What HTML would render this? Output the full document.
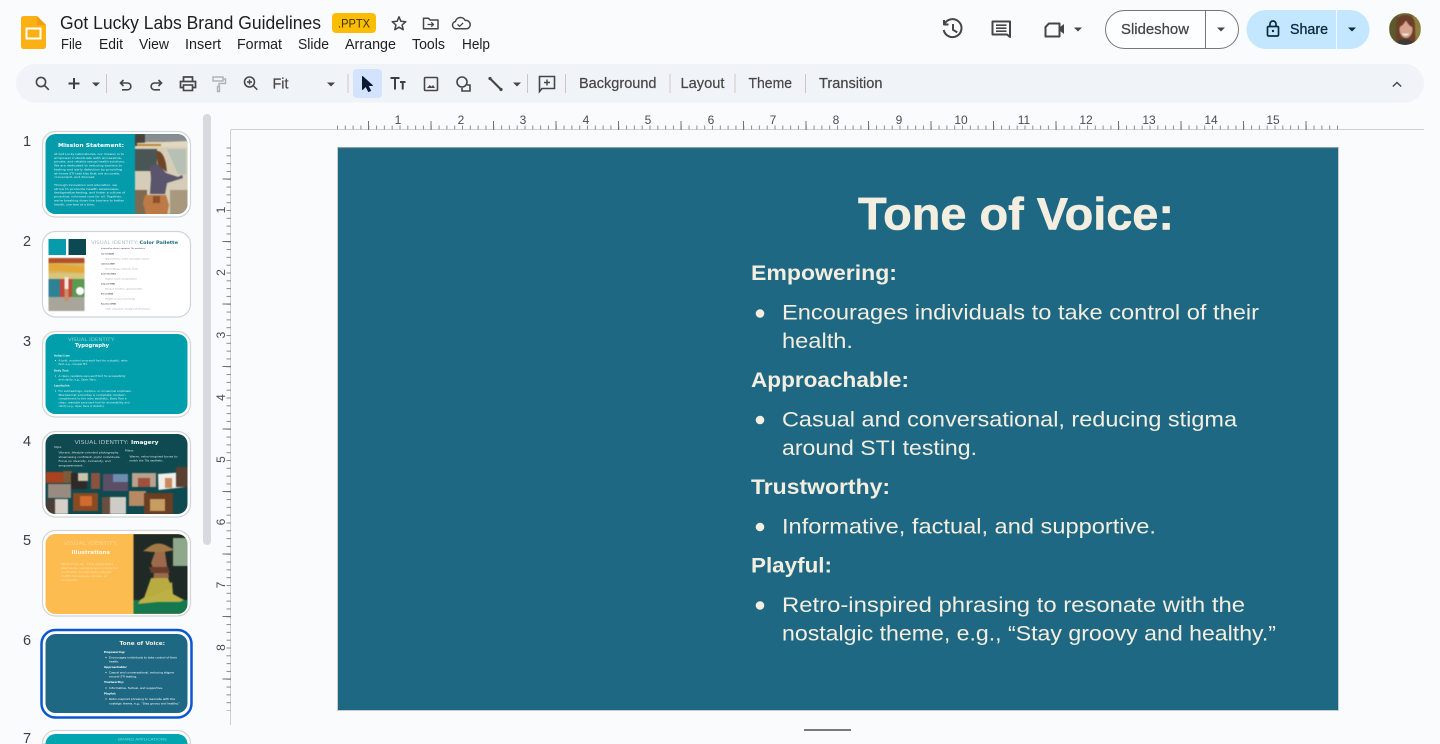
<!DOCTYPE html>
<html lang="en"><head><meta charset="utf-8"><title>Got Lucky Labs Brand Guidelines</title>
<style>
html,body{margin:0;padding:0;width:1440px;height:744px;overflow:hidden;background:#f9fbfd}
svg{display:block;overflow:hidden}
text{font-family:"Liberation Sans",Arial,sans-serif}
.t{fill:#1f1f1f}
.m{font-size:14.5px;fill:#1f1f1f}
.tb{font-size:14.5px;fill:#444746;stroke:#444746;stroke-width:.2px}
.r{font-size:12px;fill:#4a4d4f;text-anchor:middle}
.mono{font-family:"DejaVu Sans",sans-serif}
.n{font-size:14.5px;fill:#3c4043;text-anchor:middle}
.s{fill:#f3eee0}
.sb{fill:#f3eee0;font-weight:700}
.th{font-family:"DejaVu Sans",sans-serif;font-size:3px;fill:#fff}
.thb{font-family:"DejaVu Sans",sans-serif;font-weight:700;fill:#fff}
.blur{filter:blur(.5px)}
.blur2{filter:blur(.25px)}
</style></head><body>
<svg width="1440" height="744" viewBox="0 0 1440 744" xmlns="http://www.w3.org/2000/svg">
<defs>
<pattern id="hmin" x="337" y="120" width="7.8125" height="10" patternUnits="userSpaceOnUse"><rect x="0" y="5.500" width="1" height="4" fill="#8a8d8e"/></pattern>
<pattern id="hmaj" x="368" y="120" width="62.5" height="10" patternUnits="userSpaceOnUse"><rect x="0" y="1" width="1" height="9" fill="#6f7274"/></pattern>
<pattern id="vmin" x="226" y="147.5" width="5" height="7.8125" patternUnits="userSpaceOnUse"><rect x="0.5" y="0" width="4.5" height="1" fill="#8a8d8e"/></pattern>
<pattern id="vmaj" x="222" y="178.5" width="9" height="62.5" patternUnits="userSpaceOnUse"><rect x="0.5" y="0" width="8.5" height="1" fill="#6f7274"/></pattern>
<clipPath id="c1"><rect x="45.500" y="134" width="142" height="80" rx="10"/></clipPath>
<clipPath id="c2"><rect x="45.500" y="234" width="142" height="80" rx="10"/></clipPath>
<clipPath id="c4"><rect x="45.500" y="434" width="142" height="80" rx="10"/></clipPath>
<clipPath id="c5"><rect x="45.500" y="534" width="142" height="80" rx="10"/></clipPath>
<clipPath id="av"><circle cx="1405" cy="29" r="16"/></clipPath>
</defs>
<rect width="1440" height="744" fill="#f9fbfd"/>

<!-- logo -->
<path d="M21 18.500a2.500 2.500 0 0 1 2.500-2.500H37l9 9v21.500a2.500 2.500 0 0 1-2.500 2.500h-20a2.500 2.500 0 0 1-2.500-2.500z" fill="#fbb114"/>
<path d="M37 16l9 9h-9z" fill="#f29d0c"/>
<rect x="26.500" y="28.500" width="14" height="10" fill="none" stroke="#fff" stroke-width="2"/>

<text x="60" y="29" font-size="18.500" class="t" textLength="261" lengthAdjust="spacingAndGlyphs">Got Lucky Labs Brand Guidelines</text>
<rect x="332" y="13" width="44" height="20" rx="4" fill="#fbbc04"/>
<text x="338" y="27.500" font-size="11.500" fill="#3c3200" textLength="32" lengthAdjust="spacingAndGlyphs">.PPTX</text>
<g fill="none" stroke="#444746" stroke-width="1.500" stroke-linejoin="round">
<path d="M399 16.800l1.900 4.500 4.900.4-3.700 3.200 1.100 4.800-4.200-2.500-4.200 2.500 1.100-4.800-3.700-3.200 4.900-.4z"/>
<path d="M423.500 28.800V18.300h5l1.600 1.700h7.900v8.800z"/>
<path d="M427.500 24.500h6m-2.300-2.200l2.300 2.200-2.300 2.200" stroke-width="1.300"/>
<path d="M458 28.800h-1.500-0a0 0 0 0 1 0 0h-.5M457 28.800h-.5"/>
<path d="M466.800 28.800h-10.800a3.700 3.700 0 0 1-.6-7.300 5.200 5.200 0 0 1 9.800-1 4.200 4.200 0 0 1 1.600 8.300z"/>
<path d="M457.500 24.300l2.100 2.100 3.500-3.500" stroke-width="1.300"/>
</g>

<text x="61" y="49" class="m" textLength="21" lengthAdjust="spacingAndGlyphs">File</text>
<text x="99" y="49" class="m" textLength="24" lengthAdjust="spacingAndGlyphs">Edit</text>
<text x="139" y="49" class="m" textLength="30" lengthAdjust="spacingAndGlyphs">View</text>
<text x="185" y="49" class="m" textLength="36" lengthAdjust="spacingAndGlyphs">Insert</text>
<text x="237" y="49" class="m" textLength="45" lengthAdjust="spacingAndGlyphs">Format</text>
<text x="298" y="49" class="m" textLength="31" lengthAdjust="spacingAndGlyphs">Slide</text>
<text x="345" y="49" class="m" textLength="51" lengthAdjust="spacingAndGlyphs">Arrange</text>
<text x="412" y="49" class="m" textLength="33" lengthAdjust="spacingAndGlyphs">Tools</text>
<text x="462" y="49" class="m" textLength="28" lengthAdjust="spacingAndGlyphs">Help</text>

<!-- top right -->
<g fill="none" stroke="#444746" stroke-width="2">
<path d="M944.500 24a9 9 0 1 1-.8 6"/>
<path d="M944 20v4.500h4.500" stroke-linejoin="round"/>
<path d="M953 24v5.800l4.300 2.600"/>
<path d="M992.500 21.500h17.500v15.500l-3-2.500h-14.500z" stroke-linejoin="round"/>
<path d="M996 25.200h10.500M996 28.200h10.500M996 31.200h10.500" stroke-width="1.700"/>
<path d="M1049 23.500h10.500v13H1045.500v-9.500z" stroke-linejoin="round"/>
</g>
<path d="M1059.500 27.500l4.500-3.500v10l-4.500-3.500z" fill="#444746"/>
<path d="M1074 27.500h8l-4 4z" fill="#444746"/>
<rect x="1105.500" y="10.500" width="133" height="38" rx="19" fill="#fff" fill-opacity=".7" stroke="#747775"/>
<path d="M1205.500 10.500v38" stroke="#747775"/>
<text x="1121" y="34" font-size="14.500" fill="#444746" stroke="#444746" stroke-width=".25" textLength="68" lengthAdjust="spacingAndGlyphs">Slideshow</text>
<path d="M1217 27.500h8l-4 4z" fill="#444746"/>
<path d="M1266 10h84a19 19 0 0 1 0 39h-84a19 19 0 0 1 0-39z" fill="#c2e7ff"/>
<path d="M1336.500 10v39" stroke="#f2fbff"/>
<rect x="1267.500" y="26.500" width="11" height="9.500" rx="1.200" fill="none" stroke="#0c2a3d" stroke-width="1.700"/>
<path d="M1270 26.500v-2.500a3 3 0 0 1 6 0v2.500" fill="none" stroke="#0c2a3d" stroke-width="1.700"/>
<circle cx="1273" cy="31" r="1.200" fill="#0c2a3d"/>
<text x="1290" y="34" font-size="14.500" fill="#0c2a3d" stroke="#0c2a3d" stroke-width=".3" textLength="38" lengthAdjust="spacingAndGlyphs">Share</text>
<path d="M1348 27.500h8l-4 4z" fill="#0c2a3d"/>
<g clip-path="url(#av)"><g class="blur">
<rect x="1389" y="13" width="32" height="32" fill="#6f6a36"/>
<rect x="1389" y="13" width="9" height="32" fill="#5c5a2b"/>
<rect x="1413" y="13" width="8" height="32" fill="#8d7f3c"/>
<path d="M1396 44v-18q0-11 9.500-11t9.500 11l.5 18z" fill="#6b3f2a"/>
<ellipse cx="1406" cy="29.500" rx="6.500" ry="8.500" fill="#d8a48e"/>
<path d="M1399 27q4-1 7-7 2 5 6 7l1-6-6-3-6 2z" fill="#6b3f2a"/>
<path d="M1402 33q3.500 2 7 0-1 2.500-3.500 2.500t-3.500-2.500z" fill="#fff"/>
<path d="M1396 46q1-7 9-7t9 7z" fill="#3a3a38"/>
</g></g>

<!-- toolbar -->
<rect x="16" y="64" width="1408" height="38.500" rx="19" fill="#f0f4f9"/>
<rect x="353" y="69" width="29" height="29" rx="4" fill="#d3e3fd"/>
<g fill="none" stroke="#444746" stroke-width="1.600">
<circle cx="41" cy="82" r="4.600"/><path d="M44.500 85.500l4.300 4.300"/>
<path d="M74 78v11M68.500 83.500h11" stroke-width="2" stroke="#3c4043"/>
<path d="M106.500 74v19" stroke="#c7c7c7" stroke-width="1"/>
<path d="M121 83h6.500a3.400 3.400 0 0 1 0 6.800h-5.500"/><path d="M123.500 80l-3 3 3 3"/>
<path d="M161 83h-6.500a3.400 3.400 0 0 0 0 6.800h5.500"/><path d="M158.500 80l3 3-3 3"/>
<path d="M183.500 81v-4h9v4M183.500 87.500h-3V81.500h15v6h-3" stroke-width="1.700"/><rect x="183.500" y="85" width="9" height="5.500" stroke-width="1.600"/>
<path d="M213 77h10v4h-10zM223 79h2.500v4.500h-6.500v3M217.500 86.500h2v5h-2z" stroke="#b0b3b5" stroke-width="1.400"/>
<circle cx="249.500" cy="82" r="5"/><path d="M253 85.500l4.300 4.300M249.500 79.500v5M247 82h5" stroke-width="1.400"/>
<path d="M348 74v19M527.500 74v19M565.500 74v19M670 74v19M735 74v19M805.500 74v19" stroke="#c7c7c7" stroke-width="1"/>
<path d="M390.500 78h9M395 78v11.500M400 82h5.500M402.700 82v7.500" stroke-width="2" stroke="#3c4043"/>
<rect x="424.500" y="77.500" width="13" height="13" rx="1"/>
<circle cx="462" cy="82" r="5"/><path d="M467 85h3v6h-8v-3"/>
<path d="M489.500 78l12 12" stroke-width="2.200"/>
<path d="M539.500 76.500h15v12h-12.500l-2.500 3z"/><path d="M547 79.500v6M544 82.500h6" stroke-width="1.400"/>
<path d="M1392.800 86.500l4.200-4 4.200 4" stroke-width="1.400"/>
</g>
<path d="M92 82.500h8l-4 4z" fill="#444746"/>
<path d="M327 82.500h8l-4 4z" fill="#444746"/>
<path d="M513 82.500h8l-4 4z" fill="#444746"/>
<path d="M427 88l2.800-3 1.700 1.700 1.500-1.700 2 3z" fill="#444746"/>
<circle cx="490" cy="78.500" r="1.600" fill="#444746"/><circle cx="501" cy="89.500" r="1.600" fill="#444746"/>
<path d="M362.500 76.500v13l3.300-3.200 2.800 5.200 2-1-2.800-5h4.600z" fill="#0b1b33" stroke="#0b1b33" stroke-width="1" stroke-linejoin="round"/>
<text x="272.500" y="88.500" class="tb" textLength="16" lengthAdjust="spacingAndGlyphs">Fit</text>
<text x="579" y="88" class="tb" textLength="77.500" lengthAdjust="spacingAndGlyphs">Background</text>
<text x="680.500" y="88" class="tb" textLength="44" lengthAdjust="spacingAndGlyphs">Layout</text>
<text x="748.500" y="88" class="tb" textLength="43.500" lengthAdjust="spacingAndGlyphs">Theme</text>
<text x="819" y="88" class="tb" textLength="63.500" lengthAdjust="spacingAndGlyphs">Transition</text>

<!-- scrollbar -->
<rect x="203" y="114" width="8" height="431" rx="4" fill="#d7d9dd"/>

<!-- rulers -->
<path d="M231 129.500H1424" stroke="#cdcfd1"/>
<path d="M230.500 129.500V725" stroke="#cdcfd1"/>
<rect x="337" y="125" width="1001" height="5" fill="url(#hmin)"/>
<rect x="337" y="120" width="1001" height="10" fill="url(#hmaj)"/>
<rect x="226" y="147.500" width="5" height="563" fill="url(#vmin)"/>
<rect x="222" y="147.500" width="9" height="563" fill="url(#vmaj)"/>
<text x="398" y="124" class="r">1</text><text x="461" y="124" class="r">2</text><text x="523" y="124" class="r">3</text><text x="586" y="124" class="r">4</text><text x="648" y="124" class="r">5</text><text x="711" y="124" class="r">6</text><text x="773" y="124" class="r">7</text><text x="836" y="124" class="r">8</text><text x="899" y="124" class="r">9</text><text x="961" y="124" class="r">10</text><text x="1024" y="124" class="r">11</text><text x="1086" y="124" class="r">12</text><text x="1149" y="124" class="r">13</text><text x="1211" y="124" class="r">14</text><text x="1273" y="124" class="r">15</text>
<text transform="translate(225 210) rotate(-90)" class="r">1</text><text transform="translate(225 272.500) rotate(-90)" class="r">2</text><text transform="translate(225 335) rotate(-90)" class="r">3</text><text transform="translate(225 397.500) rotate(-90)" class="r">4</text><text transform="translate(225 459.500) rotate(-90)" class="r">5</text><text transform="translate(225 522) rotate(-90)" class="r">6</text><text transform="translate(225 585) rotate(-90)" class="r">7</text><text transform="translate(225 647.500) rotate(-90)" class="r">8</text>

<!-- slide -->
<rect x="337.500" y="147.500" width="1001" height="563" fill="#1f6883" stroke="#c5cacd"/>
<rect x="338" y="147.500" width="1000" height="1" fill="#4a6f80"/>
<rect x="338" y="148.500" width="1000" height="561.500" fill="#1f6883"/>
<text x="858" y="229.500" class="sb" font-size="45" stroke="#f3eee0" stroke-width=".6" textLength="316" lengthAdjust="spacingAndGlyphs">Tone of Voice:</text>
<text x="751" y="280" class="sb" font-size="21" textLength="146" lengthAdjust="spacingAndGlyphs">Empowering:</text>
<circle cx="760" cy="313.500" r="4.300" fill="#f3eee0"/>
<text x="782" y="319.500" class="s" font-size="21.500" textLength="477" lengthAdjust="spacingAndGlyphs">Encourages individuals to take control of their</text>
<text x="782" y="348" class="s" font-size="21.500" textLength="71" lengthAdjust="spacingAndGlyphs">health.</text>
<text x="751" y="387" class="sb" font-size="21" textLength="158" lengthAdjust="spacingAndGlyphs">Approachable:</text>
<circle cx="760" cy="420" r="4.300" fill="#f3eee0"/>
<text x="782" y="426.500" class="s" font-size="21.500" textLength="455" lengthAdjust="spacingAndGlyphs">Casual and conversational, reducing stigma</text>
<text x="782" y="455" class="s" font-size="21.500" textLength="195" lengthAdjust="spacingAndGlyphs">around STI testing.</text>
<text x="751" y="494" class="sb" font-size="21" textLength="139" lengthAdjust="spacingAndGlyphs">Trustworthy:</text>
<circle cx="760" cy="527" r="4.300" fill="#f3eee0"/>
<text x="782" y="533.500" class="s" font-size="21.500" textLength="374" lengthAdjust="spacingAndGlyphs">Informative, factual, and supportive.</text>
<text x="751" y="572.500" class="sb" font-size="21" textLength="81" lengthAdjust="spacingAndGlyphs">Playful:</text>
<circle cx="760" cy="605.500" r="4.300" fill="#f3eee0"/>
<text x="782" y="612" class="s" font-size="21.500" textLength="463" lengthAdjust="spacingAndGlyphs">Retro-inspired phrasing to resonate with the</text>
<text x="782" y="640.500" class="s" font-size="21.500" textLength="494" lengthAdjust="spacingAndGlyphs">nostalgic theme, e.g., “Stay groovy and healthy.”</text>
<rect x="804" y="729" width="47" height="2" fill="#77797b"/>

<!-- thumbnails -->
<g fill="#fff" stroke="#d2d4d6" stroke-width="1.200">
<rect x="42.500" y="131.500" width="148" height="85.500" rx="13"/>
<rect x="42.500" y="231.500" width="148" height="85.500" rx="13"/>
<rect x="42.500" y="331.500" width="148" height="85.500" rx="13"/>
<rect x="42.500" y="431.500" width="148" height="85.500" rx="13"/>
<rect x="42.500" y="530.500" width="148" height="85.500" rx="13"/>
<path d="M42.500 744v-0.500a13 13 0 0 1 13-13h122a13 13 0 0 1 13 13v.5z"/>
</g>
<rect x="41.500" y="630" width="150" height="87.500" rx="14" fill="#fff" stroke="#0b57d0" stroke-width="2.500"/>

<text x="27" y="146" class="n">1</text><text x="27" y="246" class="n">2</text><text x="27" y="346" class="n">3</text><text x="27" y="446" class="n">4</text><text x="27" y="545" class="n">5</text><text x="27" y="645" class="n">6</text><text x="27" y="743" class="n">7</text>

<!-- thumb1 -->
<g clip-path="url(#c1)">
<rect x="45" y="134" width="143" height="80" fill="#049cab"/>
<g class="blur">
<rect x="135" y="134" width="53" height="80" fill="#d6cdb8"/>
<rect x="135" y="134" width="53" height="8" fill="#8a8d90"/>
<rect x="135" y="134" width="10" height="12" fill="#4a4238"/>
<path d="M137 143l51-2v6h-51z" fill="#e2d8bf"/>
<rect x="137" y="144" width="24" height="2" fill="#b9873f"/>
<path d="M135 149h22v22h-22z" fill="#4a5656"/>
<path d="M167 149h19v26l-8-1z" fill="#b7c0b4"/>
<rect x="135" y="190" width="12" height="24" fill="#7d6a50"/>
<rect x="170" y="190" width="18" height="24" fill="#a8987e"/>
<path d="M156 151q7-1 10 13l1 8-9-6z" fill="#6f4526"/>
<path d="M150 167q4-4 9-2l7 8 12 4 4-2 1 3-16 5-2 11h-15l1-16z" fill="#5a546c"/>
<path d="M145 195h21l3 10-2 10h-21l-3-12z" fill="#bd7a46"/>
<path d="M153 196h7v7h-7z" fill="#8f5029"/>
</g></g>
<text x="58" y="147" class="thb" font-size="5.500" textLength="66" lengthAdjust="spacingAndGlyphs">Mission Statement:</text>
<g fill-opacity=".85" class="blur2">
<text x="54" y="155" class="th" textLength="70" lengthAdjust="spacingAndGlyphs">At Got Lucky Laboratories, our mission is to</text>
<text x="54" y="158.800" class="th" textLength="68" lengthAdjust="spacingAndGlyphs">empower individuals with accessible,</text>
<text x="54" y="162.700" class="th" textLength="71" lengthAdjust="spacingAndGlyphs">private, and reliable sexual health solutions.</text>
<text x="54" y="166.600" class="th" textLength="68" lengthAdjust="spacingAndGlyphs">We are dedicated to reducing barriers to</text>
<text x="54" y="170.400" class="th" textLength="68" lengthAdjust="spacingAndGlyphs">testing and early detection by providing</text>
<text x="54" y="174.300" class="th" textLength="66" lengthAdjust="spacingAndGlyphs">at-home STI test kits that are accurate,</text>
<text x="54" y="178" class="th" textLength="41" lengthAdjust="spacingAndGlyphs">convenient, and discreet.</text>
<text x="54" y="186" class="th" textLength="63" lengthAdjust="spacingAndGlyphs">Through innovation and education, we</text>
<text x="54" y="189.800" class="th" textLength="65" lengthAdjust="spacingAndGlyphs">strive to promote health awareness,</text>
<text x="54" y="193.700" class="th" textLength="71" lengthAdjust="spacingAndGlyphs">destigmatize testing, and foster a culture of</text>
<text x="54" y="197.600" class="th" textLength="68" lengthAdjust="spacingAndGlyphs">proactive, informed care for all. Together,</text>
<text x="54" y="201.500" class="th" textLength="70" lengthAdjust="spacingAndGlyphs">we're breaking down the barriers to better</text>
<text x="54" y="205.400" class="th" textLength="41" lengthAdjust="spacingAndGlyphs">health, one test at a time.</text>
</g>

<!-- thumb2 -->
<g clip-path="url(#c2)">
<rect x="45" y="234" width="143" height="80" fill="#fff"/>
<rect x="48.500" y="239" width="17.500" height="16" fill="#069cab"/>
<rect x="68.500" y="239" width="17.500" height="16" fill="#0c4a53"/>
<g class="blur">
<rect x="48.500" y="258" width="36" height="53" fill="#d9b45e"/>
<rect x="48.500" y="258" width="36" height="5" fill="#b2502c"/>
<path d="M48.500 263l36 4v6l-36-3z" fill="#e2a838"/>
<rect x="48.500" y="273" width="36" height="6" fill="#d8c47a"/>
<rect x="48.500" y="279" width="12" height="18" fill="#2e8294"/>
<rect x="60" y="279" width="12" height="18" fill="#c8453a"/>
<rect x="72" y="279" width="12.500" height="18" fill="#5a9a52"/>
<rect x="48.500" y="297" width="36" height="14" fill="#a8a59a"/>
<circle cx="80" cy="291" r="4" fill="#fff"/>
<rect x="64.500" y="277" width="4" height="12" fill="#efe8dc"/>
<rect x="64.500" y="289" width="4" height="12" fill="#c98f68"/>
</g></g>
<text x="91" y="244" font-size="4.700" class="mono" fill="#a9bfc4" textLength="47" lengthAdjust="spacingAndGlyphs">VISUAL IDENTITY:</text>
<text x="139.500" y="244" font-size="4.700" class="mono" font-weight="700" fill="#1d6780" textLength="38.500" lengthAdjust="spacingAndGlyphs">Color Pallette</text>
<g class="mono" font-size="1.900" fill="#445">
<text x="101" y="249" textLength="44" lengthAdjust="spacingAndGlyphs">Inspired by vibrant, optimistic 70s aesthetics</text>
<text x="101" y="254.500" textLength="13" font-weight="700" lengthAdjust="spacingAndGlyphs">Cheer Teal #00A0AD</text>
<text x="105" y="259.500" fill="#99a" textLength="44" lengthAdjust="spacingAndGlyphs">Represents fun, health and modern outlook</text>
<text x="101" y="264.500" textLength="14" font-weight="700" lengthAdjust="spacingAndGlyphs">Cookie Green #0E4F57</text>
<text x="105" y="269.500" fill="#99a" textLength="33" lengthAdjust="spacingAndGlyphs">Grounding, natural, trust</text>
<text x="101" y="274.500" textLength="15" font-weight="700" lengthAdjust="spacingAndGlyphs">Sunshine Yellow #FDBC50</text>
<text x="105" y="279.500" fill="#99a" textLength="32" lengthAdjust="spacingAndGlyphs">Joyful, warm and positive</text>
<text x="101" y="284.500" textLength="14" font-weight="700" lengthAdjust="spacingAndGlyphs">Vintage Cream #F3EEE0</text>
<text x="105" y="289.500" fill="#99a" textLength="37" lengthAdjust="spacingAndGlyphs">Neutral, timeless, approachable</text>
<text x="101" y="294.500" textLength="12" font-weight="700" lengthAdjust="spacingAndGlyphs">Retro Coral #E9654B</text>
<text x="105" y="299.500" fill="#99a" textLength="30" lengthAdjust="spacingAndGlyphs">Playful accent and energy</text>
<text x="101" y="304.500" textLength="15" font-weight="700" lengthAdjust="spacingAndGlyphs">Deep Ocean #1F6883</text>
<text x="105" y="309.500" fill="#99a" textLength="45" lengthAdjust="spacingAndGlyphs">Calm and grown, steady and informative</text>
</g>

<!-- thumb3 -->
<rect x="45.500" y="334" width="142" height="80" rx="10" fill="#009fab"/>
<text x="68" y="341" font-size="4.700" class="mono" fill="#8ad3d8" textLength="47" lengthAdjust="spacingAndGlyphs">VISUAL IDENTITY:</text>
<text x="75" y="347" class="thb" font-size="4.800" textLength="34" lengthAdjust="spacingAndGlyphs">Typography</text>
<g fill-opacity=".85">
<text x="54" y="356.500" style="font-size:2.300px" class="th" textLength="16" font-weight="700" lengthAdjust="spacingAndGlyphs">Headings &amp; Logos:</text>
<text x="58.500" y="361.500" style="font-size:2.300px" class="th" textLength="69" lengthAdjust="spacingAndGlyphs">A bold, rounded sans-serif font for a playful, retro</text>
<text x="58.500" y="365" style="font-size:2.300px" class="th" textLength="29" lengthAdjust="spacingAndGlyphs">feel, e.g., Cooper BT.</text>
<text x="54" y="371.500" style="font-size:2.300px" class="th" textLength="15" font-weight="700" lengthAdjust="spacingAndGlyphs">Body Text:</text>
<text x="58.500" y="377" style="font-size:2.300px" class="th" textLength="67" lengthAdjust="spacingAndGlyphs">A clean, readable sans-serif font for accessibility</text>
<text x="58.500" y="380.500" style="font-size:2.300px" class="th" textLength="38" lengthAdjust="spacingAndGlyphs">and clarity, e.g., Open Sans.</text>
<text x="54" y="386.500" style="font-size:2.300px" class="th" textLength="16" font-weight="700" lengthAdjust="spacingAndGlyphs">Supporting Font:</text>
<text x="58.500" y="392" style="font-size:2.300px" class="th" textLength="73" lengthAdjust="spacingAndGlyphs">For subheadings, captions, or occasional emphasis,</text>
<text x="58.500" y="396" style="font-size:2.300px" class="th" textLength="67" lengthAdjust="spacingAndGlyphs">Montserrat provides a complete modern</text>
<text x="58.500" y="399.500" style="font-size:2.300px" class="th" textLength="68" lengthAdjust="spacingAndGlyphs">complement to the retro aesthetic. Body Text a</text>
<text x="58.500" y="403.500" style="font-size:2.300px" class="th" textLength="71" lengthAdjust="spacingAndGlyphs">clean, readable sans-serif font for accessibility and</text>
<text x="58.500" y="407" style="font-size:2.300px" class="th" textLength="46" lengthAdjust="spacingAndGlyphs">clarity (e.g., Open Sans or Roboto).</text>
</g>
<circle cx="55.500" cy="360.500" r=".5" fill="#fff"/><circle cx="55.500" cy="376" r=".5" fill="#fff"/><circle cx="55.500" cy="391" r=".5" fill="#fff"/>

<!-- thumb4 -->
<g clip-path="url(#c4)">
<rect x="45" y="434" width="143" height="80" fill="#0e4a50"/>
<g class="blur">
<rect x="46" y="472" width="17" height="11" fill="#a8421f"/>
<rect x="63" y="471" width="9" height="12" fill="#7c5a3a"/>
<rect x="71" y="473" width="16" height="16" fill="#2f2a28"/>
<rect x="78" y="473" width="10" height="8" fill="#c9c3a8"/>
<rect x="91" y="473" width="9" height="16" fill="#8a5240"/>
<rect x="103" y="474" width="25" height="17" fill="#5a4f65"/>
<rect x="113" y="474" width="15" height="8" fill="#6f8db0"/>
<rect x="132" y="473" width="24" height="14" fill="#b7a28e"/>
<rect x="138" y="478" width="12" height="9" fill="#a24f3e"/>
<path d="M158 474l27-2 .5 15-27 3z" fill="#efeee8"/>
<rect x="165" y="478" width="7" height="10" fill="#c98a60"/>
<rect x="176" y="467" width="12" height="20" fill="#58412e"/>
<rect x="48" y="484" width="23" height="14" fill="#9a8b80"/>
<rect x="46" y="499" width="22" height="15" fill="#d6cfc6"/>
<rect x="46" y="499" width="9" height="15" fill="#4a3e38"/>
<rect x="73" y="493" width="25" height="18" fill="#8a4a24"/>
<rect x="80" y="496" width="12" height="10" fill="#d26b30"/>
<rect x="102" y="497" width="24" height="17" fill="#cdcdc6"/>
<rect x="102" y="497" width="8" height="17" fill="#6a4f3e"/>
<rect x="129" y="491" width="17" height="15" fill="#b88a64"/>
<rect x="144" y="493" width="29" height="21" fill="#6a3e22"/>
<rect x="150" y="499" width="15" height="12" fill="#c79d62"/>
</g></g>
<text x="74.500" y="444" font-size="4.800" class="mono" fill="#a9c4c4" textLength="54" lengthAdjust="spacingAndGlyphs">VISUAL IDENTITY:</text>
<text x="131" y="444" class="thb" font-size="4.800" textLength="27.500" lengthAdjust="spacingAndGlyphs">Imagery</text>
<g fill-opacity=".85">
<text x="54" y="448" style="font-size:2.300px" class="th" textLength="8" lengthAdjust="spacingAndGlyphs">Style:</text>
<text x="58.500" y="453.500" style="font-size:2.300px" class="th" textLength="60" lengthAdjust="spacingAndGlyphs">Vibrant, lifestyle-oriented photography</text>
<text x="58.500" y="458" style="font-size:2.300px" class="th" textLength="62" lengthAdjust="spacingAndGlyphs">showcasing confident, joyful individuals.</text>
<text x="58.500" y="462" style="font-size:2.300px" class="th" textLength="52" lengthAdjust="spacingAndGlyphs">Focus on diversity, inclusivity, and</text>
<text x="58.500" y="466.500" style="font-size:2.300px" class="th" textLength="25" lengthAdjust="spacingAndGlyphs">empowerment.</text>
<text x="125" y="451.500" style="font-size:2.300px" class="th" textLength="9" lengthAdjust="spacingAndGlyphs">Filters:</text>
<text x="129.500" y="457.500" style="font-size:2.300px" class="th" textLength="48" lengthAdjust="spacingAndGlyphs">Warm, retro-inspired tones to</text>
<text x="129.500" y="461.500" style="font-size:2.300px" class="th" textLength="34" lengthAdjust="spacingAndGlyphs">match the 70s aesthetic.</text>
</g>

<!-- thumb5 -->
<g clip-path="url(#c5)">
<rect x="45" y="534" width="143" height="80" fill="#fdbc50"/>
<g class="blur">
<rect x="133.500" y="534" width="55" height="80" fill="#1f2a26"/>
<rect x="173" y="538" width="15" height="28" fill="#8fa88c"/>
<rect x="133.500" y="600" width="55" height="14" fill="#16784f"/>
<path d="M149 547q9-7 20 0l6 3-11 2h-12l-9-1z" fill="#a37a45"/>
<path d="M155 552h10l2 14 2 11-4 6h-12l1-12-3-8z" fill="#9c6a4a"/>
<path d="M149 567h19l2 6h-19z" fill="#6a3d2c"/>
<path d="M156 590l16-8 1 12 11 6-4 2-22 0-20 2 2-4z" fill="#bdb044"/>
<path d="M151 578h17l4 10-20 8-8 2z" fill="#b8ab40"/>
</g></g>
<text x="64" y="545" font-size="4.800" class="mono" fill="#fdd38c" textLength="54" lengthAdjust="spacingAndGlyphs">VISUAL IDENTITY:</text>
<text x="71.500" y="554" class="thb" font-size="5" fill-opacity=".85" textLength="38.500" lengthAdjust="spacingAndGlyphs">Illustrations</text>
<g fill-opacity=".55">
<text x="61" y="565" style="font-size:2.500px" class="th" textLength="52" lengthAdjust="spacingAndGlyphs">Whimsical, 70s-inspired</text>
<text x="61" y="569" style="font-size:2.500px" class="th" textLength="57" lengthAdjust="spacingAndGlyphs">elements, using brand colors for</text>
<text x="61" y="573" style="font-size:2.500px" class="th" textLength="50" lengthAdjust="spacingAndGlyphs">contrasts. Incorporate playful</text>
<text x="61" y="577" style="font-size:2.500px" class="th" textLength="46" lengthAdjust="spacingAndGlyphs">motifs like waves, arrows, or</text>
<text x="61" y="581" style="font-size:2.500px" class="th" textLength="17" lengthAdjust="spacingAndGlyphs">sunbursts.</text>
</g>

<!-- thumb6 -->
<rect x="45.500" y="634" width="142" height="79" rx="10" fill="#1f6883"/>
<text x="119.500" y="645" class="thb" font-size="5.200" style="fill:#f3eee0" textLength="45.500" lengthAdjust="spacingAndGlyphs">Tone of Voice:</text>
<g>
<text x="104" y="653" class="thb" font-size="2.600" textLength="21" lengthAdjust="spacingAndGlyphs">Empowering:</text>
<text x="109" y="658.500" style="font-size:2.600px" class="th" textLength="68" lengthAdjust="spacingAndGlyphs">Encourages individuals to take control of their</text>
<text x="109" y="662.500" style="font-size:2.600px" class="th" textLength="10" lengthAdjust="spacingAndGlyphs">health.</text>
<text x="104" y="668" class="thb" font-size="2.600" textLength="23" lengthAdjust="spacingAndGlyphs">Approachable:</text>
<text x="109" y="673.500" style="font-size:2.600px" class="th" textLength="65" lengthAdjust="spacingAndGlyphs">Casual and conversational, reducing stigma</text>
<text x="109" y="677.500" style="font-size:2.600px" class="th" textLength="28" lengthAdjust="spacingAndGlyphs">around STI testing.</text>
<text x="104" y="683" class="thb" font-size="2.600" textLength="20" lengthAdjust="spacingAndGlyphs">Trustworthy:</text>
<text x="109" y="689" style="font-size:2.600px" class="th" textLength="54" lengthAdjust="spacingAndGlyphs">Informative, factual, and supportive.</text>
<text x="104" y="694.500" class="thb" font-size="2.600" textLength="12" lengthAdjust="spacingAndGlyphs">Playful:</text>
<text x="109" y="700" style="font-size:2.600px" class="th" textLength="66" lengthAdjust="spacingAndGlyphs">Retro-inspired phrasing to resonate with the</text>
<text x="109" y="704.500" style="font-size:2.600px" class="th" textLength="71" lengthAdjust="spacingAndGlyphs">nostalgic theme, e.g., “Stay groovy and healthy.”</text>
</g>
<circle cx="106" cy="657.500" r=".6" fill="#f3eee0"/><circle cx="106" cy="672.500" r=".6" fill="#f3eee0"/><circle cx="106" cy="688" r=".6" fill="#f3eee0"/><circle cx="106" cy="699" r=".6" fill="#f3eee0"/>

<!-- thumb7 -->
<path d="M45.500 744a10 10 0 0 1 10-10h122a10 10 0 0 1 10 10z" fill="#00a5b0"/>
<text x="118" y="740.500" font-size="3.600" class="mono" fill="#8ad3d8" textLength="49" lengthAdjust="spacingAndGlyphs">BRAND APPLICATIONS</text>
</svg>
</body></html>
